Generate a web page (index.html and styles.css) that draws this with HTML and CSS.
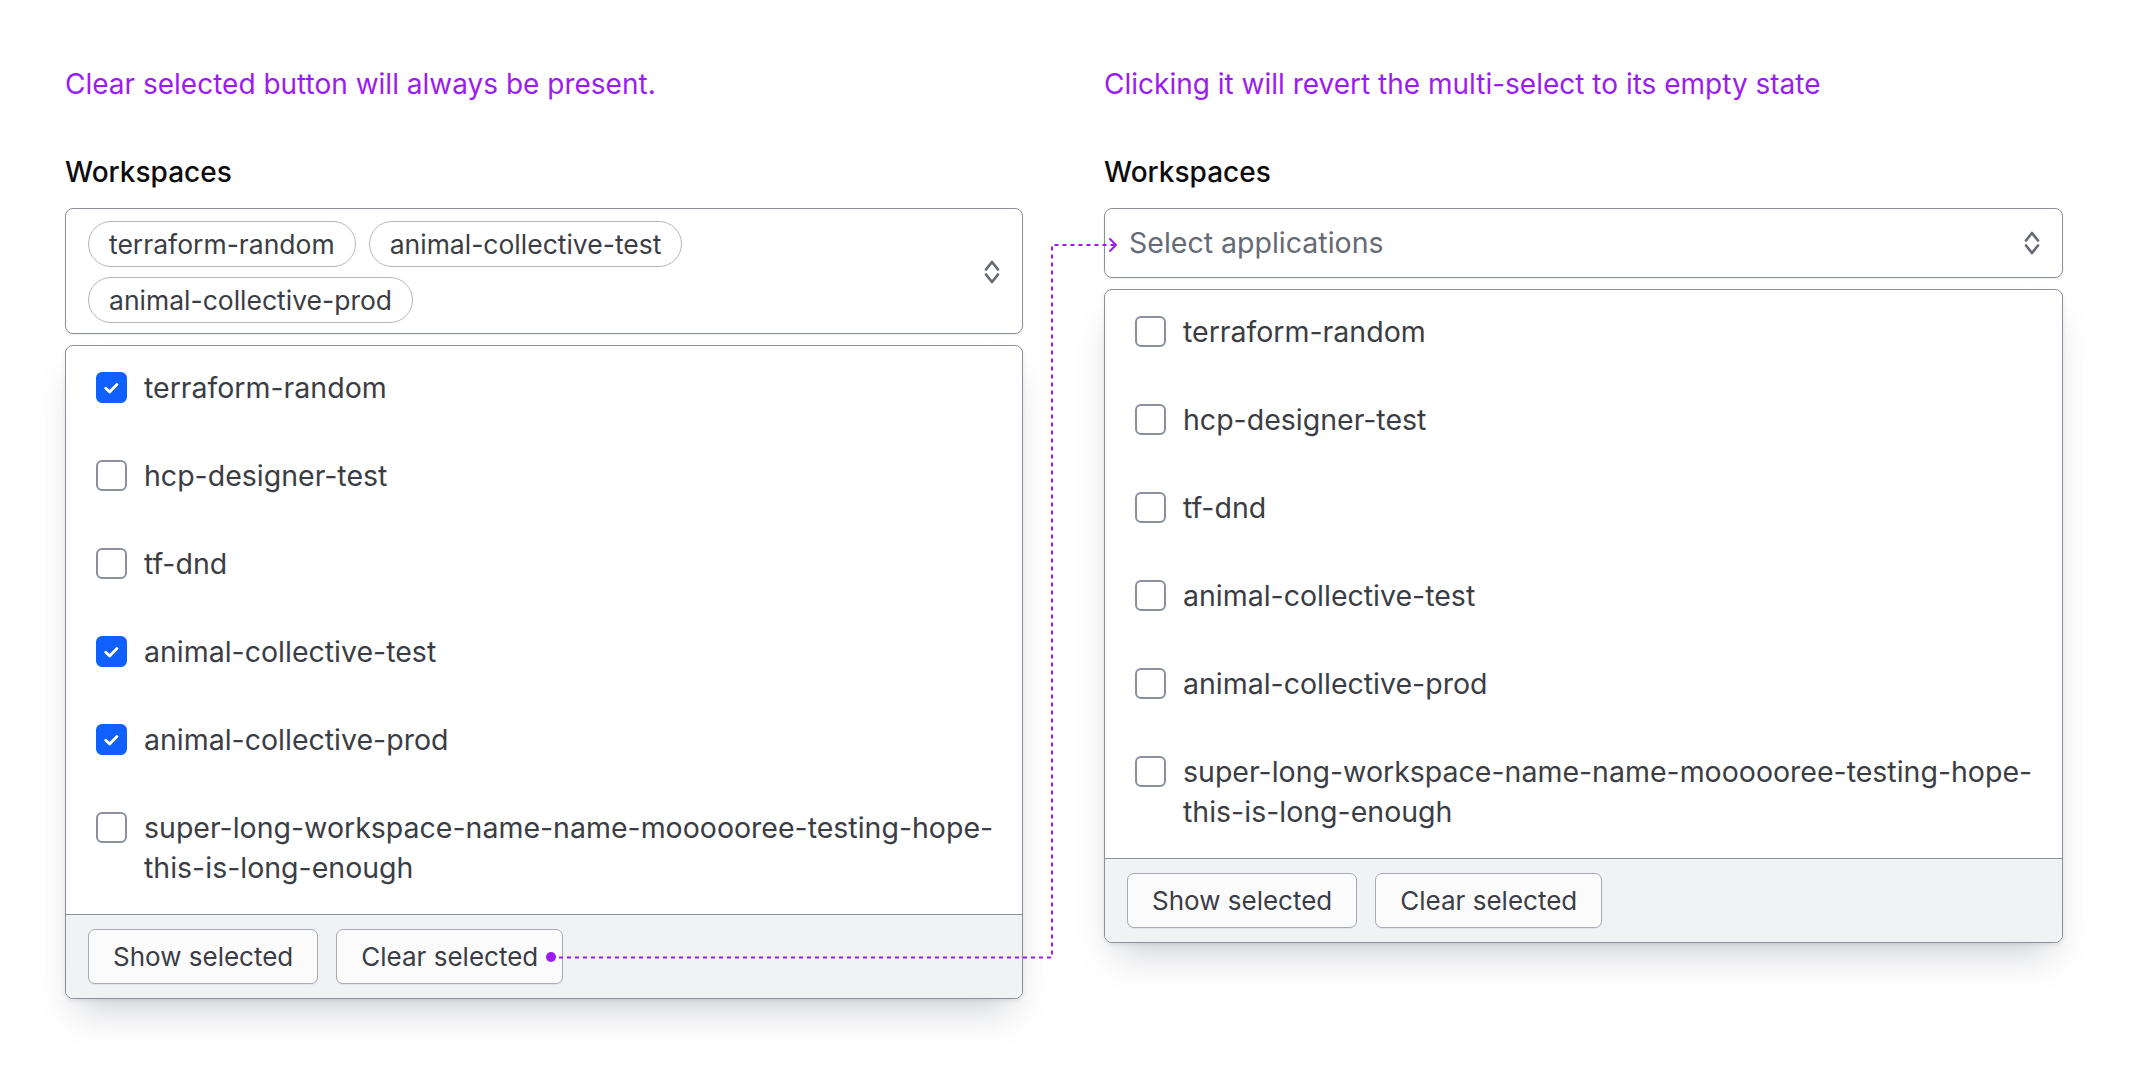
FILE: index.html
```html
<!DOCTYPE html>
<html lang="en">
<head>
<meta charset="utf-8">
<title>Multi-select</title>
<link rel="stylesheet" href="styles.css">
</head>
<body>
<div class="page">
  <section class="col">
    <p class="note">Clear selected button will always be present.</p>
    <div class="label">Workspaces</div>
    <div class="select select--tags">
      <div class="tags">
        <span class="chip">terraform-random</span>
        <span class="chip">animal-collective-test</span>
        <span class="chip">animal-collective-prod</span>
      </div>
      <svg class="caret" viewBox="0 0 18 26" width="18" height="26"><path d="M3 10.5 L9 3 L15 10.5 M3 15.5 L9 23 L15 15.5" fill="none" stroke="#656a76" stroke-width="2.7" stroke-linecap="round" stroke-linejoin="round"/></svg>
    </div>
    <div class="panel">
      <ul class="options">
        <li class="option"><span class="cb cb--on"><svg viewBox="0 0 16 16"><path d="M4.6 8.4 L6.9 10.6 L11.2 6.2" fill="none" stroke="#fff" stroke-width="1.7" stroke-linecap="round" stroke-linejoin="round"/></svg></span><span class="opt-text">terraform-random</span></li>
        <li class="option"><span class="cb"></span><span class="opt-text">hcp-designer-test</span></li>
        <li class="option"><span class="cb"></span><span class="opt-text">tf-dnd</span></li>
        <li class="option"><span class="cb cb--on"><svg viewBox="0 0 16 16"><path d="M4.6 8.4 L6.9 10.6 L11.2 6.2" fill="none" stroke="#fff" stroke-width="1.7" stroke-linecap="round" stroke-linejoin="round"/></svg></span><span class="opt-text">animal-collective-test</span></li>
        <li class="option"><span class="cb cb--on"><svg viewBox="0 0 16 16"><path d="M4.6 8.4 L6.9 10.6 L11.2 6.2" fill="none" stroke="#fff" stroke-width="1.7" stroke-linecap="round" stroke-linejoin="round"/></svg></span><span class="opt-text">animal-collective-prod</span></li>
        <li class="option"><span class="cb"></span><span class="opt-text">super-long-workspace-name-name-moooooree-testing-hope-this-is-long-enough</span></li>
      </ul>
      <div class="footer">
        <button class="btn">Show selected</button>
        <button class="btn">Clear selected<span class="dot"></span></button>
      </div>
    </div>
  </section>
  <section class="col">
    <p class="note">Clicking it will revert the multi-select to its empty state</p>
    <div class="label">Workspaces</div>
    <div class="select select--empty">
      <span class="placeholder">Select applications</span>
      <svg class="caret" viewBox="0 0 18 26" width="18" height="26"><path d="M3 10.5 L9 3 L15 10.5 M3 15.5 L9 23 L15 15.5" fill="none" stroke="#656a76" stroke-width="2.7" stroke-linecap="round" stroke-linejoin="round"/></svg>
    </div>
    <div class="panel">
      <ul class="options">
        <li class="option"><span class="cb"></span><span class="opt-text">terraform-random</span></li>
        <li class="option"><span class="cb"></span><span class="opt-text">hcp-designer-test</span></li>
        <li class="option"><span class="cb"></span><span class="opt-text">tf-dnd</span></li>
        <li class="option"><span class="cb"></span><span class="opt-text">animal-collective-test</span></li>
        <li class="option"><span class="cb"></span><span class="opt-text">animal-collective-prod</span></li>
        <li class="option"><span class="cb"></span><span class="opt-text">super-long-workspace-name-name-moooooree-testing-hope-this-is-long-enough</span></li>
      </ul>
      <div class="footer">
        <button class="btn">Show selected</button>
        <button class="btn">Clear selected</button>
      </div>
    </div>
  </section>
  <svg class="connector" width="2130" height="1088" viewBox="0 0 2130 1088">
    <path d="M559 957.5 H1052 V245 H1115" fill="none" stroke="#9a1cf3" stroke-width="2" stroke-dasharray="4 4"/>
    <path d="M1110 239 L1116 245 L1110 251" fill="none" stroke="#9a1cf3" stroke-width="2" stroke-linecap="round" stroke-linejoin="round"/>
  </svg>
</div>
</body>
</html>
```
FILE: styles.css
```css
* { box-sizing: border-box; }
html, body { margin: 0; padding: 0; background: #fff; }
body {
  font-family: Inter, "Noto Sans", "Liberation Sans", sans-serif;
  color: #3b3d45;
}
.page {
  position: relative;
  display: grid;
  grid-template-columns: 958px 959px;
  column-gap: 81px;
  padding: 64px 0 0 65px;
  min-height: 1088px;
}
.col {
  display: flex;
  flex-direction: column;
}
.note {
  margin: 0;
  font-size: 28px;
  line-height: 40px;
  color: #9a1cf3;
}
.label {
  margin-top: 48px;
  font-size: 28px;
  line-height: 40px;
  font-weight: 500;
  color: #0c0c0e;
}
.select {
  margin-top: 16px;
  border: 1px solid #8c909c;
  border-radius: 8px;
  background: #fff;
  display: flex;
  align-items: center;
  box-shadow: 0 1px 2px rgba(101, 106, 118, 0.12);
}
.select--tags { padding: 12px 21px 10px 22px; }
.select--empty { padding: 14px 21px 14px 24px; }
.tags {
  flex: 1;
  display: flex;
  flex-wrap: wrap;
  gap: 10px 13px;
}
.chip {
  display: inline-flex;
  align-items: center;
  height: 46px;
  padding: 0 20px;
  border: 1px solid #b4b7be;
  border-radius: 999px;
  font-size: 26.5px;
  color: #3b3d45;
}
.placeholder {
  flex: 1;
  font-size: 28.5px;
  line-height: 40px;
  color: #656a76;
}
.caret { flex: none; margin-left: 16px; display: block; }
.panel {
  margin-top: 11px;
  border: 1px solid #8c909c;
  border-radius: 8px;
  background: #fff;
  overflow: hidden;
  box-shadow: 0 2px 4px rgba(101, 106, 118, 0.12), 0 22px 36px -12px rgba(101, 106, 118, 0.32);
}
.options {
  list-style: none;
  margin: 0;
  padding: 0 10px 0 30px;
}
.option {
  display: flex;
  align-items: flex-start;
  gap: 17px;
  padding: 22px 0 26px;
}
.cb {
  flex: none;
  width: 31px;
  height: 31px;
  margin-top: 4px;
  border: 2px solid #8c909c;
  border-radius: 6px;
  background: #fff;
  display: flex;
  align-items: center;
  justify-content: center;
}
.cb--on {
  border-color: #1060ff;
  background: #1060ff;
}
.cb svg { width: 29px; height: 29px; display: block; }
.opt-text {
  font-size: 28.5px;
  line-height: 40px;
  color: #3b3d45;
}
.footer {
  display: flex;
  gap: 18px;
  padding: 14px 22px;
  background: #f1f2f3;
  border-top: 1px solid #8c909c;
}
.btn {
  position: relative;
  height: 55px;
  padding: 0 24px;
  border: 1px solid #a8abb3;
  border-radius: 7px;
  background: #fbfbfc;
  font-family: inherit;
  font-size: 26px;
  color: #3b3d45;
  box-shadow: 0 1px 1px rgba(101, 106, 118, 0.1);
}
.dot {
  position: absolute;
  right: 6px;
  top: 50%;
  width: 10px;
  height: 10px;
  margin-top: -5px;
  border-radius: 50%;
  background: #9a1cf3;
}
.connector {
  position: absolute;
  left: 0;
  top: 0;
  pointer-events: none;
}
```
